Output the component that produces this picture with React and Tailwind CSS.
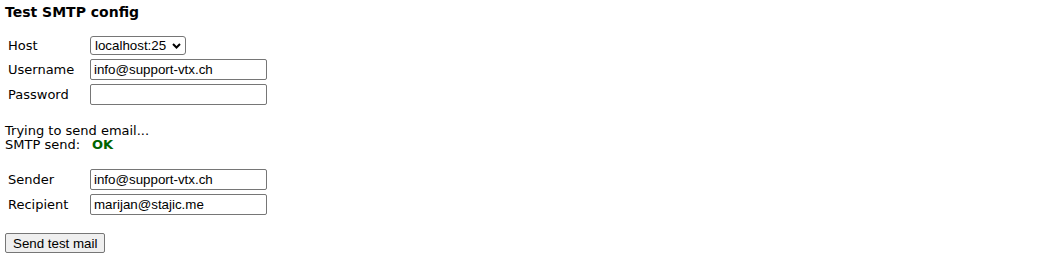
import React, { useState } from 'react';

const labelCls = "text-[13px] leading-[15px] text-black";
const fieldCls =
  "h-[21px] w-[177px] rounded-[2px] border border-[#767676] bg-white px-[3px] font-['Liberation_Sans',Arial,sans-serif] text-[13.333px] text-black outline-none";

const Chevron = () => (
  <svg width="9" height="6" viewBox="0 0 9 6" className="shrink-0">
    <path d="M1 1 L4.5 4.5 L8 1" fill="none" stroke="#000" strokeWidth="2" />
  </svg>
);

export default function App() {
  const [host, setHost] = useState('localhost:25');
  const [username, setUsername] = useState('info@support-vtx.ch');
  const [password, setPassword] = useState('');
  const [sender, setSender] = useState('info@support-vtx.ch');
  const [recipient, setRecipient] = useState('marijan@stajic.me');

  return (
    <div className="min-h-screen bg-white pl-[5px] pt-[4px] font-['DejaVu_Sans',Verdana,sans-serif] text-black">
      <h1 className="text-[14px] font-bold leading-[17px]">Test SMTP config</h1>

      {/* smtp settings */}
      <div className="ml-[3px] mt-[15px] grid grid-cols-[82px_auto] items-center justify-start gap-y-[4px]">
        <span className={labelCls}>Host</span>
        <div className="flex h-[19px] w-[96px] items-center rounded-[3px] border border-[#767676] bg-white pl-[4px] pr-[4px]">
          <select
            value={host}
            onChange={(e) => setHost(e.target.value)}
            className="min-w-0 flex-1 appearance-none bg-transparent font-['Liberation_Sans',Arial,sans-serif] text-[13.333px] leading-[15px] text-black outline-none"
          >
            <option>localhost:25</option>
          </select>
          <Chevron />
        </div>

        <span className={labelCls}>Username</span>
        <input className={fieldCls} value={username} onChange={(e) => setUsername(e.target.value)} />

        <span className={labelCls}>Password</span>
        <input type="password" className={fieldCls} value={password} onChange={(e) => setPassword(e.target.value)} />
      </div>

      {/* result */}
      <div className="mt-[19px] text-[13px] leading-[14px]">
        <div>Trying to send email...</div>
        <div className="flex">
          <span>SMTP send:</span>
          <span className="ml-[12px] font-bold text-[#006400]">OK</span>
        </div>
      </div>

      {/* mail */}
      <div className="ml-[3px] mt-[17px] grid grid-cols-[82px_auto] items-center justify-start gap-y-[4px]">
        <span className={labelCls}>Sender</span>
        <input className={fieldCls} value={sender} onChange={(e) => setSender(e.target.value)} />

        <span className={labelCls}>Recipient</span>
        <input className={fieldCls} value={recipient} onChange={(e) => setRecipient(e.target.value)} />
      </div>

      <button
        type="button"
        className="mt-[18px] h-[20px] rounded-[2px] border border-[#767676] bg-[#efefef] px-[7px] font-['Liberation_Sans',Arial,sans-serif] text-[13.333px] leading-[15px] text-black"
      >
        Send test mail
      </button>
    </div>
  );
}
